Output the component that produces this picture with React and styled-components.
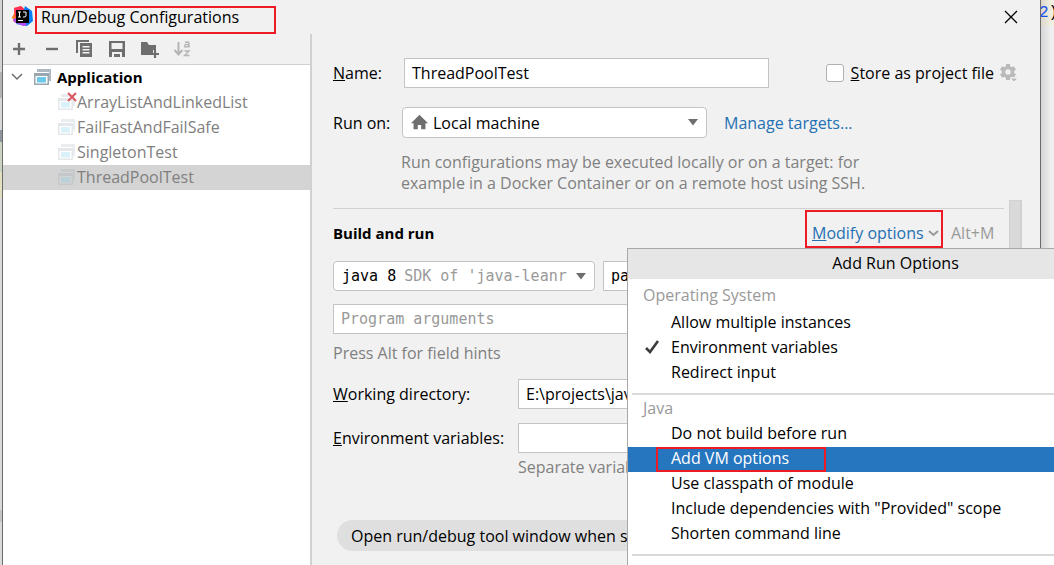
import React from "react";
import styled, { createGlobalStyle, css } from "styled-components";

const Global = createGlobalStyle`
  *, *::before, *::after { box-sizing: border-box; }
  body { margin: 0; overflow: hidden; background: #dcdcdc; }
  body, button, input, select {
    font-family: "Open Sans", "Noto Sans", sans-serif;
    font-size: 16px;
    line-height: 20px;
    color: #000;
  }
`;

const mono = css`
  font-family: "DejaVu Sans Mono", monospace;
  font-size: 15px;
`;

const Screen = styled.div`
  display: grid;
  grid-template-columns: 2px minmax(0, 1fr) 13px;
  height: 100vh;
  overflow: hidden;
`;

const LeftEdge = styled.div`
  background: linear-gradient(#d4d4d4 72px, #b4b4b4 72px 98px, #d9d9d9 98px 130px, #8f959d 130px 142px, #cdd3c2 142px 172px, #e2dfc0 172px 198px, #dadada 198px 510px, #c4c4c4 510px 522px, #dadada 522px);
`;

const RightEdge = styled.div`
  background: linear-gradient(90deg, #d6d6d6, #efefef 10px);
`;

const CodeLine = styled.code`
  display: block;
  height: 26px;
  font-family: "Liberation Mono", monospace;
  font-size: 16px;
  line-height: 26px;
  text-indent: -2px;
  white-space: nowrap;
  background: linear-gradient(90deg, #dcd9cc, #f1eee2 10px);
  b { font-weight: 400; color: #1750eb; }
`;

const Dialog = styled.main`
  position: relative;
  display: grid;
  grid-template-rows: 34px minmax(0, 1fr);
  background: #f1f1f1;
  border-left: 1px solid #6b6b6b;
  border-right: 1px solid #6b6b6b;
`;

const TitleBar = styled.header`
  display: flex;
  align-items: flex-start;
  padding: 6px 19px 0 9px;
`;

const TitleText = styled.h1`
  flex: 0 0 241px;
  height: 28px;
  margin: 0 auto 0 1px;
  padding: 0 4px;
  border: 2px solid #ed1c24;
  font-size: 16px;
  line-height: 18px;
  font-weight: 400;
`;

const IconButton = styled.button`
  display: flex;
  align-items: center;
  justify-content: center;
  width: 20px;
  height: 20px;
  padding: 0;
  border: 0;
  background: none;
  opacity: ${(p) => (p.disabled ? 0.45 : 1)};
`;

const Body = styled.div`
  display: grid;
  grid-template-columns: 309px minmax(0, 1fr);
  min-height: 0;
`;

const Sidebar = styled.aside`
  display: flex;
  flex-direction: column;
  border-right: 2px solid #d1d1d1;
`;

const Toolbar = styled.div`
  display: flex;
  gap: 13px;
  height: 31px;
  padding: 5px 6px;
  border-bottom: 1px solid #d1d1d1;
`;

const Tree = styled.ul`
  flex: 1;
  margin: 0;
  padding: 0;
  list-style: none;
  background: #fff;
`;

const TreeRow = styled.li`
  display: flex;
  align-items: center;
  gap: ${(p) => (p.$root ? 4 : 0)}px;
  height: 25px;
  padding: 0 0 2px ${(p) => (p.$root ? 7 : 54)}px;
  font-size: ${(p) => (p.$root ? 15 : 16)}px;
  font-weight: ${(p) => (p.$root ? 700 : 400)};
  color: ${(p) => (p.$root ? "#000" : "#808080")};
  background: ${(p) => (p.$selected ? "#d4d4d4" : "transparent")};
`;

const TypeIcon = styled.span`
  display: flex;
  margin-left: 5px;
`;

const Form = styled.form`
  display: flex;
  flex-direction: column;
  min-width: 0;
  padding: 24px 18px 0 21px;
`;

const Row = styled.div`
  display: flex;
  align-items: center;
  height: ${(p) => p.$h || 30}px;
  margin-top: ${(p) => p.$mt || 0}px;
  margin-right: ${(p) => p.$mr || 0}px;
`;

const Label = styled.label`
  flex: 0 0 ${(p) => p.$w}px;
  white-space: nowrap;
`;

const TextInput = styled.input`
  flex: ${(p) => (p.$w ? `0 0 ${p.$w}px` : "1 1 0")};
  min-width: 0;
  height: 30px;
  margin: 0 0 0 ${(p) => p.$ml || 0}px;
  padding: 0 7px 1px;
  border: 1px solid #c4c4c4;
  background: #fff;
  ${(p) => p.$mono && mono}
  &::placeholder { color: #999; opacity: 1; }
`;

const Combo = styled.div`
  display: flex;
  align-items: center;
  gap: ${(p) => p.$gap}px;
  flex: 0 0 ${(p) => p.$w}px;
  min-width: 0;
  height: ${(p) => p.$h}px;
  padding: 0 7px 0 8px;
  border: 1px solid #c4c4c4;
  border-radius: 4px;
  background: #fff;
  white-space: nowrap;
  ${(p) => p.$mono && mono}
`;

const Select = styled.select`
  flex: 1;
  min-width: 0;
  padding: 0;
  border: 0;
  appearance: none;
  background: none;
  color: ${(p) => (p.$muted ? "#999" : "#000")};
  ${(p) => p.$mono && mono}
`;

const Link = styled.a`
  margin-left: 17px;
  color: #2470b3;
  text-decoration: none;
`;

const CheckLabel = styled.label`
  display: flex;
  align-items: center;
  gap: 7px;
  margin: 0 5px 0 auto;
  white-space: nowrap;
`;

const Check = styled.input`
  appearance: none;
  width: 18px;
  height: 18px;
  margin: 0;
  border: 1px solid #b0b0b0;
  border-radius: 3px;
  background: #fff;
`;

const Hint = styled.p`
  margin: ${(p) => p.$mt || 0}px 0 0 ${(p) => p.$ml || 0}px;
  line-height: 21px;
  color: #808080;
`;

const Scrolled = styled.div`
  display: grid;
  grid-template-columns: minmax(0, 1fr) 13px;
  gap: 5px;
  flex: 1;
  margin-top: 6px;
`;

const Settings = styled.section`
  display: flex;
  flex-direction: column;
  align-items: stretch;
  margin-top: 8px;
  border-top: 1px solid #d1d1d1;
`;

const ScrollTrack = styled.div`
  border: 1px solid #d1d1d1;
  border-right-width: 2px;
  background: #d9d9d9;
`;

const SectionTitle = styled.h2`
  margin: 0 auto 0 0;
  padding-top: 8px;
  font-size: 15px;
  line-height: 20px;
`;

const ModifyButton = styled.button`
  display: flex;
  align-items: center;
  gap: 4px;
  height: 38px;
  width: 138px;
  padding: 8px 2px 0 5px;
  border: 2px solid #ed1c24;
  background: none;
  color: #2470b3;
  white-space: nowrap;
`;

const Shortcut = styled.span`
  flex: 0 0 47px;
  margin: 8px 6px 0 8px;
  color: #999;
`;

const Pill = styled.button`
  align-self: flex-start;
  height: 31px;
  margin: 42px 0 0 4px;
  padding: 0 14px;
  border: 0;
  border-radius: 16px;
  background: #dfdfdf;
  white-space: nowrap;
`;

const Popup = styled.div`
  position: absolute;
  top: 248px;
  left: 624px;
  width: 537px;
  height: 400px;
  border: 1px solid #a8a8a8;
  background: #fff;
`;

const PopupTitle = styled.h2`
  margin: 0;
  height: 30px;
  font-size: 16px;
  font-weight: 400;
  line-height: 28px;
  text-align: center;
  background: #e6e6e6;
`;

const GroupLabel = styled.div`
  padding-left: 15px;
  line-height: ${(p) => p.$h}px;
  color: #999;
`;

const MenuItem = styled.button`
  display: grid;
  grid-template-columns: 28px auto;
  align-items: center;
  width: 100%;
  height: 25px;
  padding: 0 0 ${(p) => (p.$active ? 2 : 3)}px 15px;
  border: 0;
  text-align: left;
  background: ${(p) => (p.$active ? "#2675bf" : "none")};
  color: ${(p) => (p.$active ? "#fff" : "#000")};
  span { grid-column: 2; grid-row: 1; }
`;

const Marked = styled.span`
  justify-self: start;
  width: 170px;
  height: 25px;
  margin-left: -15px;
  padding-left: 13px;
  line-height: 18px;
  border: 2px solid #ed1c24;
`;

const Divider = styled.hr`
  height: 2px;
  margin: 7px 0 0 4px;
  border: 0;
  background: #d9d9d9;
`;

const Logo = () => (
  <svg width="22" height="22" viewBox="0 0 22 22" aria-hidden="true">
    <path d="M2 2 9 0l6 5-4 13-9-2-2-5 2-3z" fill="#fc801d" />
    <path d="M2 2 9 0l5 5L3 11z" fill="#fe315d" />
    <path d="M13 0 20 5l1 10-6 5-11-2 6-8z" fill="#087cfa" />
    <path d="M1 13 10 10l5 9-4 1-9-4z" fill="#b74af7" />
    <path d="M4 4h13v13H4z" fill="#000" />
    <path d="M6 6h3M7.500 6v5M6 11h3M11 6h3v4q0 1-2 1h-1M6 14.500h5" stroke="#fff" fill="none" />
  </svg>
);

const AppIcon = ({ faded, error }) => (
  <svg width="20" height="20" viewBox="0 0 20 20" aria-hidden="true">
    <g opacity={faded ? 0.25 : 1}>
      <path d="M4 2h14v12h-2V5H4z" fill="#9aa7b0" opacity=".8" />
      <path d="M1 6h15v12H1zM2.500 9v7.500h12V9z" fill="#9aa7b0" fillRule="evenodd" />
      <path d="M4 10h9v5.500H4z" fill="#6cc9ea" />
    </g>
    {error && <path d="m11 1 8 8m0-8-8 8" stroke="#db5860" strokeWidth="2" />}
  </svg>
);

const Ic = ({ children, w = 20 }) => (
  <svg width={w} height={w} viewBox="0 0 20 20" fill="none" aria-hidden="true">{children}</svg>
);
const Arrow = () => (
  <svg width="12" height="7" viewBox="0 0 12 7" aria-hidden="true"><path d="M1 0h10L6 6.500z" fill="#6e6e6e" /></svg>
);

const G = "#6e6e6e";

function Item({ children, checked, active }) {
  return (
    <MenuItem type="button" role="menuitem" $active={active}>
      {checked && (
        <svg width="18" height="18" viewBox="0 0 18 18" fill="none" aria-hidden="true">
          <path d="m3 10 4 4L15 3" stroke="#3c3c3c" strokeWidth="2.600" />
        </svg>
      )}
      {active ? <Marked>{children}</Marked> : <span>{children}</span>}
    </MenuItem>
  );
}

export default function App() {
  return (
    <Screen>
      <Global />
      <LeftEdge />
      <Dialog>
        <TitleBar>
          <Logo />
          <TitleText>Run/Debug Configurations</TitleText>
          <IconButton aria-label="Close">
            <Ic><path d="m4 5 12 12M16 5 4 17" stroke="#000" strokeWidth="1.300" /></Ic>
          </IconButton>
        </TitleBar>
        <Body>
          <Sidebar>
            <Toolbar>
              <IconButton aria-label="Add"><Ic><path d="M10 4v12M4 10h12" stroke={G} strokeWidth="2.400" /></Ic></IconButton>
              <IconButton aria-label="Remove"><Ic><path d="M4 10h12" stroke={G} strokeWidth="2.400" /></Ic></IconButton>
              <IconButton aria-label="Copy"><Ic>
                <path d="M1 1h13v2H3v11H1z" fill={G} />
                <path fillRule="evenodd" d="M5 4h12v14H5zM7.500 7v1.500h7V7zM7.500 10v1.500h7V10zM7.500 13v1.500h7V13z" fill={G} />
              </Ic></IconButton>
              <IconButton aria-label="Save"><Ic><path fillRule="evenodd" d="M1 2h16v16H1zM3.500 4v6h11V4zM4 13v5h10v-5zM6 15h6v3H6z" fill={G} /></Ic></IconButton>
              <IconButton aria-label="New folder"><Ic>
                <path d="M0 3h6l2 3h7v5h-3v3h-2v2H0z" fill={G} />
                <path d="M14 11v8M10 15h8" stroke={G} strokeWidth="2.200" />
              </Ic></IconButton>
              <IconButton aria-label="Sort" disabled><Ic>
                <path d="M4.500 3v11M.5 11l4 4.500 4-4.500" stroke={G} strokeWidth="2" />
                <path d="M11 3.500q4-1.500 4 1V8.500M15 5.500q-4.500-.5-4.500 1.500t4.500 0M10.500 12H15l-4.500 4.500h5" stroke={G} strokeWidth="1.400" />
              </Ic></IconButton>
            </Toolbar>
            <Tree>
              <TreeRow $root>
                <svg width="14" height="10" viewBox="0 0 14 10" fill="none" aria-hidden="true"><path d="m2 2 5 5 5-5" stroke={G} strokeWidth="1.500" /></svg>
                <TypeIcon><AppIcon /></TypeIcon>Application
              </TreeRow>
              <TreeRow><AppIcon faded error />ArrayListAndLinkedList</TreeRow>
              <TreeRow><AppIcon faded />FailFastAndFailSafe</TreeRow>
              <TreeRow><AppIcon faded />SingletonTest</TreeRow>
              <TreeRow $selected><AppIcon faded />ThreadPoolTest</TreeRow>
            </Tree>
          </Sidebar>
          <Form>
            <Row $mr={3}>
              <Label $w={71} htmlFor="name"><u>N</u>ame:</Label>
              <TextInput id="name" $w={365} defaultValue="ThreadPoolTest" />
              <CheckLabel><Check type="checkbox" /><span><u>S</u>tore as project file</span></CheckLabel>
              <Ic>
                <path d="M9 1v16M2 5l14 8M16 5L2 13" stroke="#bababa" strokeWidth="4" />
                <circle cx="9" cy="9" r="4.500" fill="#f1f1f1" stroke="#bababa" strokeWidth="3.500" />
                <path d="M11 15h8l-4 4z" fill="#bababa" stroke="#f1f1f1" />
              </Ic>
            </Row>
            <Row $h={31} $mt={19}>
              <Label $w={69} htmlFor="target">Run on:</Label>
              <Combo $w={305} $h={31} $gap={5}>
                <Ic w={17}><path d="M10 1 0 11h3v7h5v-5h4v5h5v-7h3z" fill={G} /></Ic>
                <Select id="target"><option>Local machine</option></Select>
                <Arrow />
              </Combo>
              <Link href="#targets">Manage targets...</Link>
            </Row>
            <Hint $mt={14} $ml={68}>Run configurations may be executed locally or on a target: for<br />example in a Docker Container or on a remote host using SSH.</Hint>
            <Scrolled>
              <Settings>
                <Row $h={40}>
                  <SectionTitle>Build and run</SectionTitle>
                  <ModifyButton type="button"><span><u>M</u>odify options</span>
                    <svg width="11" height="8" viewBox="0 0 11 8" fill="none" aria-hidden="true"><path d="m1 2 4.500 4L10 2" stroke="#999" strokeWidth="2" /></svg>
                  </ModifyButton>
                  <Shortcut>Alt+M</Shortcut>
                </Row>
                <Row $mt={12}>
                  <Combo $w={262} $h={30} $gap={8} $mono>
                    <label htmlFor="sdk">java 8</label>
                    <Select id="sdk" $muted $mono><option>SDK of 'java-leanr</option></Select>
                    <Arrow />
                  </Combo>
                  <TextInput $ml={8} $mono aria-label="Main class" defaultValue="pa" />
                </Row>
                <Row $mt={13}><TextInput $mono aria-label="Program arguments" placeholder="Program arguments" /></Row>
                <Hint $mt={9}>Press Alt for field hints</Hint>
                <Row $mt={15}>
                  <Label $w={185} htmlFor="wd"><u>W</u>orking directory:</Label>
                  <TextInput id="wd" defaultValue={"E:\\projects\\java"} />
                </Row>
                <Row $mt={14}>
                  <Label $w={185} htmlFor="env"><u>E</u>nvironment variables:</Label>
                  <TextInput id="env" />
                </Row>
                <Hint $mt={4} $ml={185}>Separate variables</Hint>
                <Pill type="button">Open run/debug tool window when started</Pill>
              </Settings>
              <ScrollTrack />
            </Scrolled>
          </Form>
        </Body>
        <Popup role="menu">
          <PopupTitle>Add Run Options</PopupTitle>
          <GroupLabel $h={32}>Operating System</GroupLabel>
          <Item>Allow multiple instances</Item>
          <Item checked>Environment variables</Item>
          <Item>Redirect input</Item>
          <Divider />
          <GroupLabel $h={27}>Java</GroupLabel>
          <Item>Do not build before run</Item>
          <Item active>Add VM options</Item>
          <Item>Use classpath of module</Item>
          <Item>Include dependencies with "Provided" scope</Item>
          <Item>Shorten command line</Item>
          <Divider />
        </Popup>
      </Dialog>
      <RightEdge><CodeLine><b>2</b>)</CodeLine></RightEdge>
    </Screen>
  );
}
